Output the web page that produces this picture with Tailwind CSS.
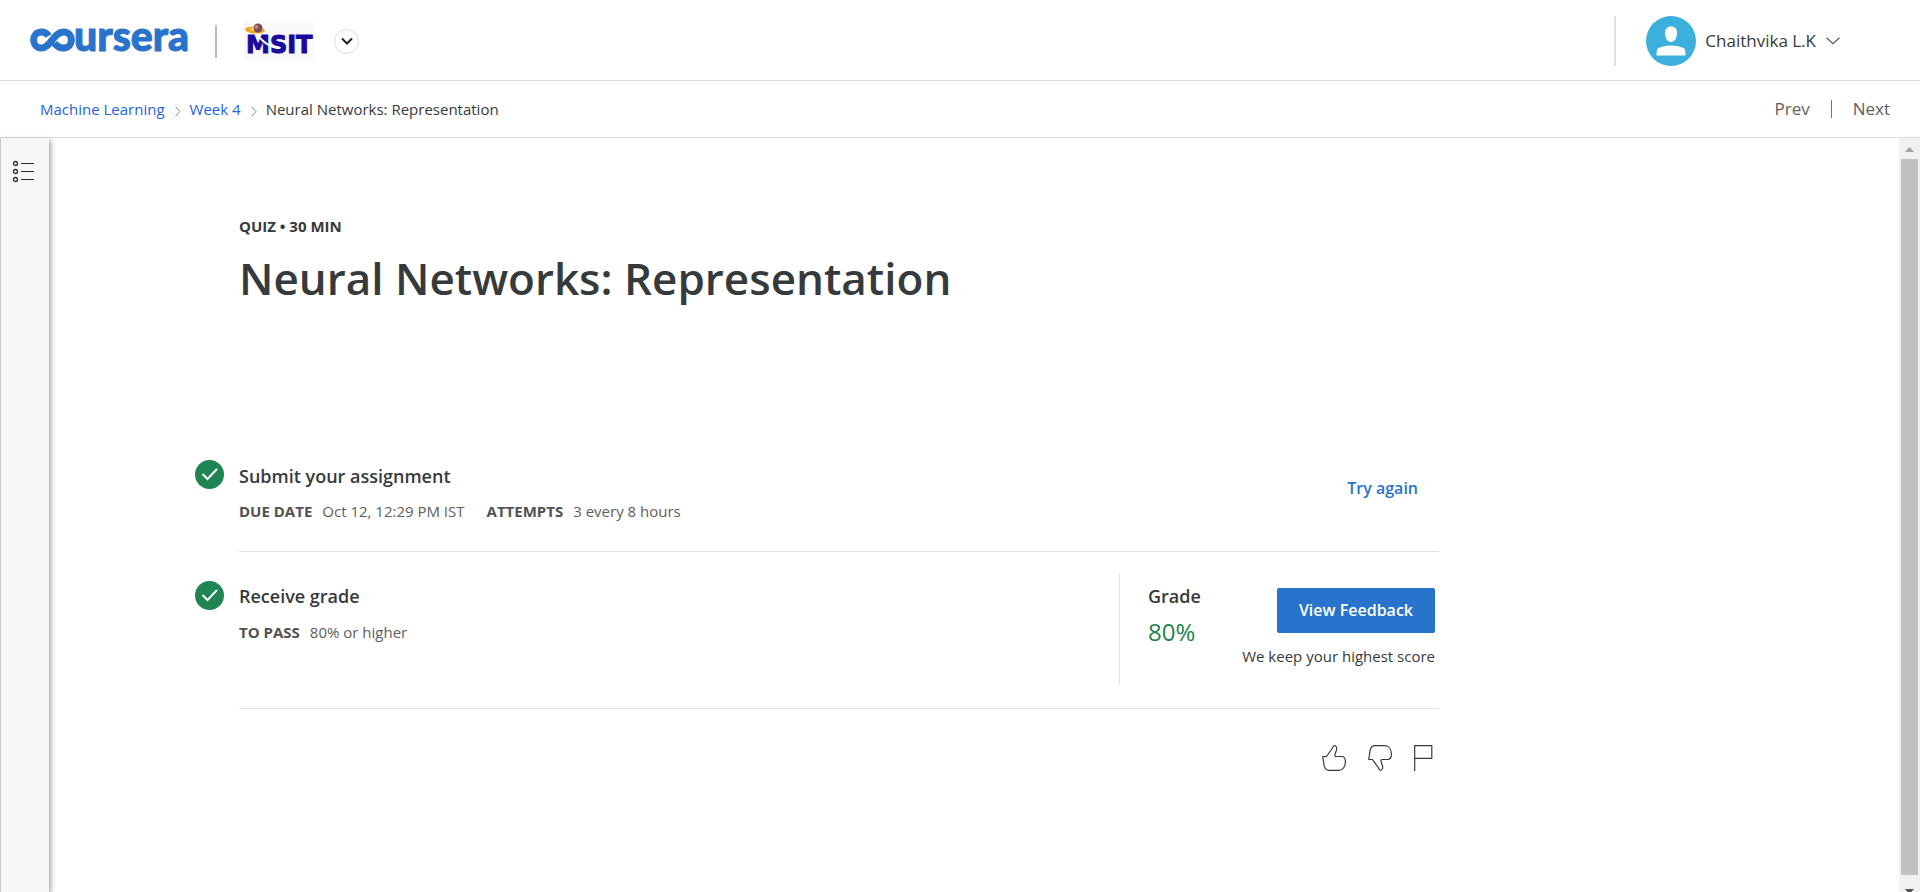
<!DOCTYPE html>
<html lang="en">
<head>
<meta charset="utf-8">
<meta name="viewport" content="width=device-width, initial-scale=1">
<title>Neural Networks: Representation | Coursera</title>
<script src="https://cdn.jsdelivr.net/npm/@tailwindcss/browser@4"></script>
</head>
<body class="flex h-screen flex-col overflow-hidden bg-white font-['Open_Sans',sans-serif] text-[#373a3c]">

<header class="flex h-[81px] shrink-0 items-center border-b border-[#dcdcdc] pt-[2px] pr-20 pl-[29px]">
  <a href="#" aria-label="Coursera" class="block">
    <svg width="162" height="60" viewBox="0 0 162 60">
      <path d="M19.500 25C17.500 21.500 15 21 12.500 21C2 21 2 37 12.500 37C21.500 37 24.500 21 34.500 21C45 21 45 37 34.500 37C30.500 37 27.500 35 25.500 32" fill="none" stroke="#2a73cc" stroke-width="7"/>
      <text x="45" y="40" fill="#2a73cc" stroke="#2a73cc" stroke-width="1" class="font-['Lato',sans-serif] text-[41px] font-black">ursera</text>
    </svg>
  </a>
  <span class="ml-6 h-[33px] w-[2px] bg-[#bbbbbb]"></span>
  <a href="#" aria-label="MSIT" class="ml-[27px] block bg-[#f9f9fc]">
    <svg width="70" height="40" viewBox="0 0 70 40">
      <ellipse cx="11" cy="9" rx="10" ry="3.500" fill="#f2a71f" transform="rotate(4 11 9)"/>
      <ellipse cx="13" cy="8" rx="6" ry="2" fill="#fbe3b0"/>
      <circle cx="14" cy="7" r="4.500" fill="#7a4a5c"/>
      <circle cx="12.500" cy="6" r="2" fill="#c98a5a"/>
      <text x="2" y="32" fill="#1a0a9c" stroke="#1a0a9c" stroke-width="1" class="font-['DejaVu_Sans',sans-serif] text-[24px] font-bold">MSIT</text>
      <path d="M13 14C18 17 22 22 31 27C24 26 17 21 13 14Z" fill="#fff"/>
    </svg>
  </a>
  <button type="button" aria-label="Switch program" class="ml-5 flex size-[25px] items-center justify-center rounded-full border border-[#dcdcdc]">
    <svg width="12" height="8" viewBox="0 0 12 8" fill="none" stroke="#1f1f1f" stroke-width="2"><path d="M1 1.500L6 6.500L11 1.500"/></svg>
  </button>

  <span class="ml-auto h-[50px] w-[2px] bg-[#e1e1e1]"></span>
  <button type="button" class="ml-[30px] flex items-center">
    <svg width="50" height="50" viewBox="0 0 50 50">
      <circle cx="25" cy="25" r="25" fill="#3cafdc"/>
      <path d="M25 10.500C29 10.500 31 13 31 17C31 22 28.500 26 25 26C21.500 26 19 22 19 17C19 13 21 10.500 25 10.500Z" fill="#fff"/>
      <path d="M10.500 39.500C10.500 35 11 32.500 13 31.800C21 28.800 29 28.800 37 31.800C39 32.500 39.500 35 39.500 39.500Z" fill="#fff"/>
    </svg>
    <span class="ml-[9px] text-[17px] leading-6">Chaithvika L.K</span>
    <svg class="ml-[10px]" width="14" height="8" viewBox="0 0 14 8" fill="none" stroke="#555" stroke-width="1.200"><path d="M.500 .800L7 6.800L13.500 .800"/></svg>
  </button>
</header>

<div class="flex h-[57px] shrink-0 items-center justify-between border-b border-[#dcdcdc] pr-[30px] pl-10">
  <nav aria-label="Breadcrumb">
    <ol class="flex items-center text-[15px] leading-6">
      <li><a href="#" class="text-[#1f63e0]">Machine Learning</a></li>
      <li class="mr-[9px] ml-[10px]" aria-hidden="true"><svg width="6" height="24" viewBox="0 0 6 24" fill="none" stroke="#888"><path d="M.500 9.500L5 14.500L.500 19.500"/></svg></li>
      <li><a href="#" class="text-[#1f63e0]">Week 4</a></li>
      <li class="mr-[9px] ml-[10px]" aria-hidden="true"><svg width="6" height="24" viewBox="0 0 6 24" fill="none" stroke="#888"><path d="M.500 9.500L5 14.500L.500 19.500"/></svg></li>
      <li>Neural Networks: Representation</li>
    </ol>
  </nav>
  <nav aria-label="Items" class="flex items-center gap-[21px] text-[17px] leading-6 text-[#5e5e5e]">
    <a href="#">Prev</a>
    <span class="h-[18px] w-px bg-[#757575]"></span>
    <a href="#">Next</a>
  </nav>
</div>

<div class="flex min-h-0 flex-1">
  <aside class="flex w-[49px] shrink-0 border-l border-[#c8c8c8] bg-[#f7f7f7] pt-[22px] pl-[11px] shadow-[2px_2px_5px_rgba(0,0,0,0.35)]">
    <button type="button" aria-label="Course outline" class="h-6">
      <svg width="24" height="24" viewBox="0 0 24 24" fill="none" stroke="#2b2b2b">
        <g stroke-width="1.300"><circle cx="3.500" cy="3.500" r="2"/><circle cx="3.500" cy="11.500" r="2"/><circle cx="3.500" cy="19.500" r="2"/></g>
        <path d="M9 3.500H22M9 11.500H22M9 19.500H22"/>
      </svg>
    </button>
  </aside>

  <main class="min-w-0 flex-1 overflow-hidden pt-[76px] pl-[146px]">
    <div class="max-w-[1244px]">
      <div class="pl-11">
        <p class="text-[15px] leading-6 font-bold">QUIZ • 30 MIN</p>
        <h1 class="mt-[10px] text-[44px] leading-[60px] font-semibold">Neural Networks: Representation</h1>
      </div>

      <section class="mt-[152px] flex items-start">
        <svg class="mr-[15px] shrink-0" width="29" height="29" viewBox="0 0 29 29"><circle cx="14.500" cy="14.500" r="14.500" fill="#208552"/><path d="M7.500 14L12.500 19L22 9" fill="none" stroke="#fff" stroke-width="2"/></svg>
        <div class="flex flex-1 items-start justify-between border-b border-[#e1e1e1] pt-1 pb-7">
          <div>
            <h2 class="text-[18px] leading-6 font-semibold">Submit your assignment</h2>
            <p class="mt-[11px] flex text-[15px] leading-6 text-[#5e5e5e]">
              <strong class="text-[#525252]">DUE DATE</strong><span class="ml-[10px]">Oct 12, 12:29 PM IST</span>
              <strong class="ml-[22px] text-[#525252]">ATTEMPTS</strong><span class="ml-[10px]">3 every 8 hours</span>
            </p>
          </div>
          <button type="button" class="mt-3 mr-[21px] text-[16px] leading-6 font-semibold text-[#2a73cc]">Try again</button>
        </div>
      </section>

      <section class="flex items-start">
        <svg class="mt-[29px] mr-[15px] shrink-0" width="29" height="29" viewBox="0 0 29 29"><circle cx="14.500" cy="14.500" r="14.500" fill="#208552"/><path d="M7.500 14L12.500 19L22 9" fill="none" stroke="#fff" stroke-width="2"/></svg>
        <div class="flex flex-1 justify-between border-b border-[#e1e1e1] pt-[21px] pr-1 pb-6">
          <div class="pt-[11px]">
            <h2 class="text-[18px] leading-6 font-semibold">Receive grade</h2>
            <p class="mt-3 flex text-[15px] leading-6 text-[#5e5e5e]"><strong class="text-[#525252]">TO PASS</strong><span class="ml-[10px]">80% or higher</span></p>
          </div>
          <div class="flex w-[316px] justify-between border-l border-[#e1e1e1] pl-7">
            <div class="pt-[11px]">
              <h3 class="text-[18px] leading-6 font-semibold">Grade</h3>
              <p class="mt-2 text-[24px] leading-8 text-[#208552]">80%</p>
            </div>
            <div class="flex flex-col items-end pt-[15px] pb-4">
              <button type="button" class="rounded-[2px] bg-[#2a73cc] px-[22px] text-[16px] leading-[45px] font-semibold text-white">View Feedback</button>
              <p class="mt-[11px] text-[15px] leading-6">We keep your highest score</p>
            </div>
          </div>
        </div>
      </section>

      <div class="mt-9 flex justify-end gap-[21px] pr-[6px]">
        <button type="button" aria-label="Like"><svg width="25" height="26" viewBox="0 0 25 26" fill="none" stroke="#373a3c" stroke-width="1.200" stroke-linejoin="round"><path d="M.700 11.500H4.500L10.500 3C11 1.500 11.500 .700 12.500 .700C14.500 .700 15 3 14.500 5L13 9.500C12.800 10.800 13 11.500 14 11.500H19.500C22 11.500 23.400 13.500 23.400 16.500C23.400 21.500 21 25.300 17 25.300H7C3.500 25.300 2.500 23 2 20Z"/></svg></button>
        <button type="button" aria-label="Dislike"><svg width="25" height="26" viewBox="0 0 25 26" fill="none" stroke="#373a3c" stroke-width="1.200" stroke-linejoin="round"><path d="M.700 14.500H4.500L10.500 23C11 24.500 11.500 25.300 12.500 25.300C14.500 25.300 15 23 14.500 21L13 16.500C12.800 15.200 13 14.500 14 14.500H19.500C22 14.500 23.400 12.500 23.400 9.500C23.400 4.500 21 .700 17 .700H7C3.500 .700 2.500 3 2 6Z"/></svg></button>
        <button type="button" aria-label="Flag"><svg width="19" height="26" viewBox="0 0 19 26" fill="none" stroke="#373a3c" stroke-width="1.200"><path d="M.700 26V.700H17.800V13.300H.700"/></svg></button>
      </div>
    </div>
  </main>

  <div class="flex w-[21px] shrink-0 flex-col items-center bg-[#f1f1f1]" aria-hidden="true">
    <svg width="21" height="21" viewBox="0 0 21 21"><path d="M6 14L10.500 9L15 14Z" fill="#a3a3a3"/></svg>
    <div class="w-[17px] flex-1 bg-[#c1c1c1]"></div>
    <svg width="21" height="17" viewBox="0 0 21 17"><path d="M6 14H15L10.500 19Z" fill="#505050"/></svg>
  </div>
</div>

</body>
</html>
